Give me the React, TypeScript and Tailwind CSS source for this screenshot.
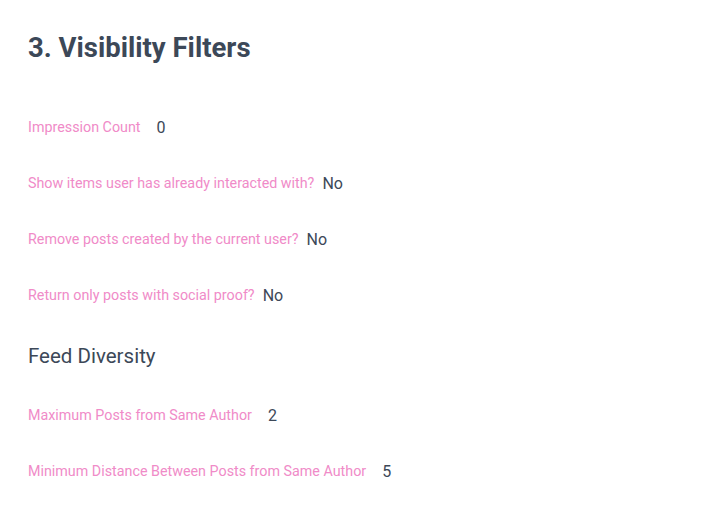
const rows1: { label: string; value: string; numeric?: boolean }[] = [
  { label: "Impression Count", value: "0", numeric: true },
  { label: "Show items user has already interacted with?", value: "No" },
  { label: "Remove posts created by the current user?", value: "No" },
  { label: "Return only posts with social proof?", value: "No" },
];

const rows2 = [
  { label: "Maximum Posts from Same Author", value: "2", numeric: true },
  { label: "Minimum Distance Between Posts from Same Author", value: "5", numeric: true },
];

function Row({ label, value, numeric }: { label: string; value: string; numeric?: boolean }) {
  return (
    <div className="flex h-14 items-center">
      <span className="text-[14.3px] text-[#f08bc8]">{label}</span>
      <span className={`text-[16px] text-[#3c4858] ${numeric ? "ml-4" : "ml-2"}`}>{value}</span>
    </div>
  );
}

export default function App() {
  return (
    <div className="min-h-[528px] w-[706px] bg-white px-7 pt-7 font-['Roboto',sans-serif]">
      <h1 className="text-[27.5px] font-bold leading-[40px] text-[#3c4858]">3. Visibility Filters</h1>
      <div className="mt-[32px]">
        {rows1.map((r) => (
          <Row key={r.label} {...r} />
        ))}
      </div>
      <h2 className="mt-[18px] text-[20.5px] leading-7 text-[#3c4858]">Feed Diversity</h2>
      <div className="mt-[18px]">
        {rows2.map((r) => (
          <Row key={r.label} {...r} />
        ))}
      </div>
    </div>
  );
}
